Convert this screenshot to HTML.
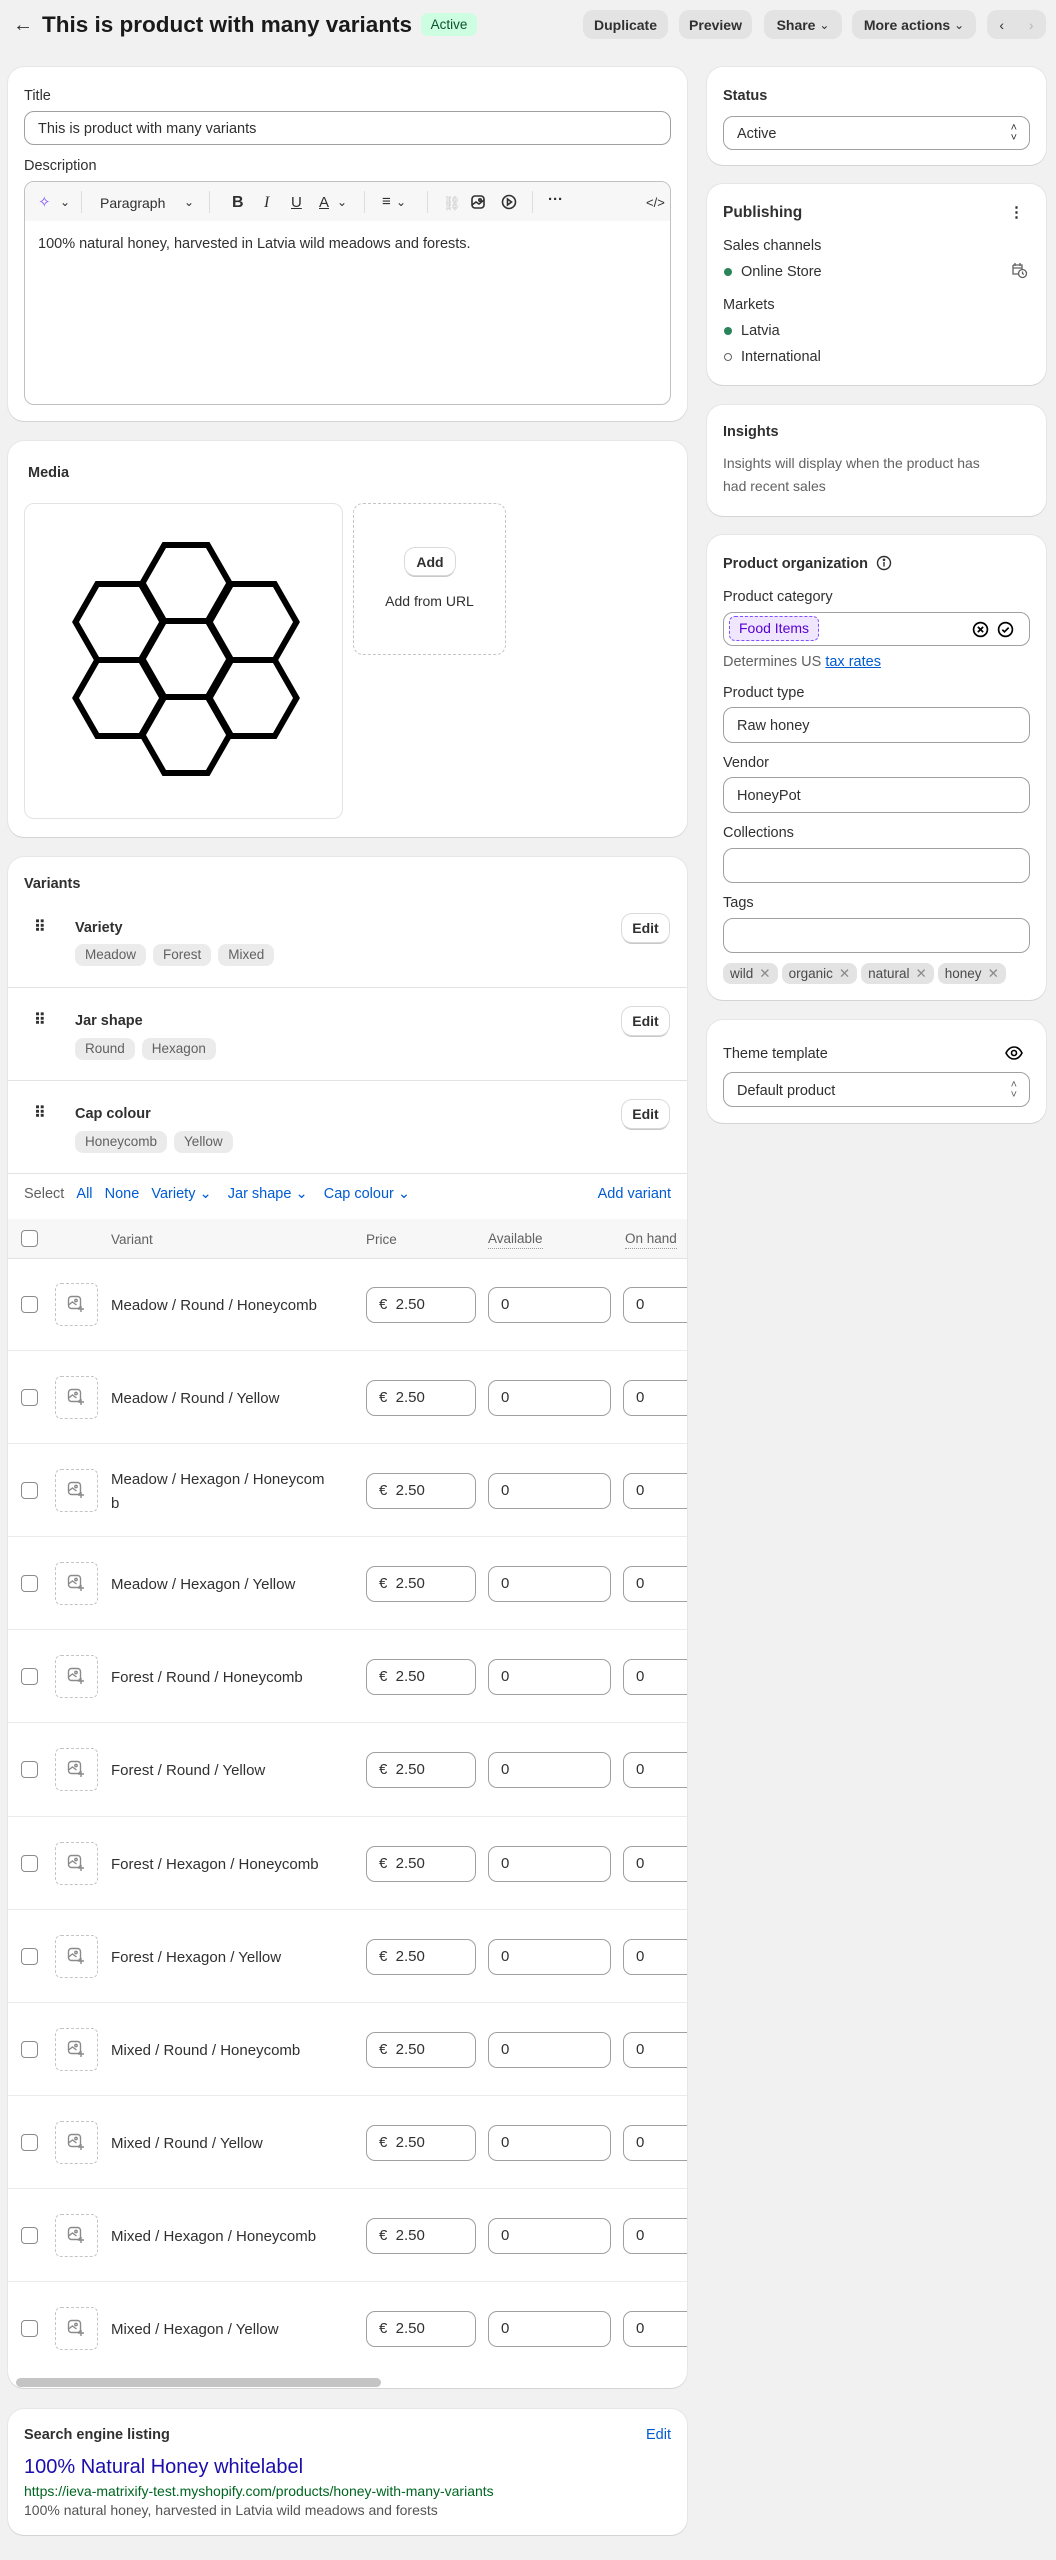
<!DOCTYPE html>
<html><head><meta charset="utf-8"><style>
*{box-sizing:border-box;margin:0;padding:0}
body{width:1056px;height:2560px;background:#f1f1f1;font-family:"Liberation Sans",sans-serif;color:#303030;position:relative;overflow:hidden;font-size:15px}
.a{position:absolute}
.t{position:absolute;line-height:20px;white-space:nowrap;margin-top:1px}
.card{position:absolute;background:#fff;border-radius:16px;box-shadow:0 1px 0 #d4d4d4,0 0 0 1px #e6e6e6;overflow:hidden}
.b{font-weight:bold}
.inp{position:absolute;border:1.5px solid #a0a0a0;border-radius:10px;background:#fff}
.inp.l{border-color:#c0c0c0}
.btn{position:absolute;background:#e3e3e3;border-radius:10px;font-size:14px;font-weight:bold;display:flex;align-items:center;justify-content:center;color:#303030}
.wbtn{position:absolute;background:#fff;border-radius:10px;box-shadow:0 0 0 1px #d9d9d9,0 2px 0 #c8c8c8;font-size:14px;font-weight:bold;display:flex;align-items:center;justify-content:center}
.chip{display:inline-block;background:#ebebeb;color:#616161;border-radius:8px;padding:0 10px;height:22px;line-height:22px;font-size:13.5px;margin-right:7px}
.link{color:#005bd3}
.sep{position:absolute;left:0;right:0;height:1px;background:#e3e3e3}
.row{position:relative;height:93.1px;border-bottom:1px solid #ebebeb}
.row .cb{position:absolute;left:21px;top:38px;width:17px;height:17px;border:1.5px solid #8a8a8a;border-radius:4px}
.row .ph{position:absolute;left:55px;top:25px;width:43px;height:43px;border:1.5px dashed #c4c4c4;border-radius:6px}
.row .ph svg{position:absolute;left:11px;top:11px}
.row .nm{position:absolute;left:111px;top:37px;line-height:21px;font-size:15px}
.row .pr{position:absolute;left:366px;top:29px;width:110px;height:36px;border:1.5px solid #a0a0a0;border-radius:9px;line-height:33px;padding-left:12px;font-size:15px}
.row .av{position:absolute;left:488px;top:29px;width:123px;height:36px;border:1.5px solid #a0a0a0;border-radius:9px;line-height:33px;padding-left:12px}
.row .oh{position:absolute;left:623px;top:29px;width:123px;height:36px;border:1.5px solid #a0a0a0;border-radius:9px;line-height:33px;padding-left:12px}
.tg{display:inline-block;background:#e3e3e3;color:#4a4a4a;border-radius:8px;padding:0 7px;height:21px;line-height:21px;font-size:13.5px;margin-right:4px}
.tg i{font-style:normal;color:#8a8a8a;margin-left:6px}
</style></head><body>

<div class="t" style="left:13px;top:14px;font-size:20px">←</div>
<div class="t b" style="left:42px;top:12px;font-size:22.5px;line-height:24px;color:#1a1a1a">This is product with many variants</div>
<div class="a" style="left:421px;top:13px;width:56px;height:23px;background:#cdfee1;color:#0c5132;border-radius:7px;font-size:13.5px;line-height:23px;text-align:center">Active</div>
<div class="btn" style="left:583px;top:10px;width:85px;height:29px">Duplicate</div>
<div class="btn" style="left:679px;top:10px;width:73px;height:29px">Preview</div>
<div class="btn" style="left:764px;top:10px;width:78px;height:29px">Share&nbsp;<span style="font-weight:normal;font-size:12px">⌄</span></div>
<div class="btn" style="left:852px;top:10px;width:124px;height:29px">More actions&nbsp;<span style="font-weight:normal;font-size:12px">⌄</span></div>
<div class="btn" style="left:987px;top:10px;width:59px;height:29px;justify-content:space-around;font-weight:normal"><span>‹</span><span style="color:#b5b5b5">›</span></div>

<div class="card" style="left:8px;top:67px;width:679px;height:354px">
  <div class="t" style="left:16px;top:18px;font-size:14.5px">Title</div>
  <div class="inp" style="left:16px;top:44px;width:647px;height:34px"><div class="t" style="left:13px;top:6px;font-size:14.5px">This is product with many variants</div></div>
  <div class="t" style="left:16px;top:88px;font-size:14.5px">Description</div>
  <div class="inp l" style="left:16px;top:114px;width:647px;height:224px;overflow:hidden">
    <div class="a" style="left:0;top:0;right:0;height:39px;background:#f7f7f7"></div>
    <div class="t" style="left:13px;top:10px;color:#8051ff;font-size:15px">✧</div>
    <div class="t" style="left:35px;top:9px;font-size:12px">⌄</div>
    <div class="a" style="left:56px;top:9px;width:1px;height:22px;background:#ddd"></div>
    <div class="t" style="left:75px;top:10px;font-size:14px">Paragraph</div>
    <div class="t" style="left:159px;top:9px;font-size:12px">⌄</div>
    <div class="a" style="left:184px;top:9px;width:1px;height:22px;background:#ddd"></div>
    <div class="t b" style="left:207px;top:10px;font-size:16px">B</div>
    <div class="t" style="left:239px;top:10px;font-size:16px;font-style:italic;font-family:'Liberation Serif',serif">I</div>
    <div class="t" style="left:266px;top:10px;font-size:15px;text-decoration:underline">U</div>
    <div class="t" style="left:294px;top:10px;font-size:15px;text-decoration:underline">A</div>
    <div class="t" style="left:312px;top:9px;font-size:12px">⌄</div>
    <div class="a" style="left:339px;top:9px;width:1px;height:22px;background:#ddd"></div>
    <div class="t" style="left:357px;top:9px;font-size:15px">≡</div>
    <div class="t" style="left:371px;top:9px;font-size:12px">⌄</div>
    <div class="a" style="left:402px;top:9px;width:1px;height:22px;background:#ddd"></div>
    <div class="t" style="left:418px;top:10px;font-size:14px;color:#c4c4c4">⛓</div>
    <svg class="a" style="left:445px;top:12px" width="16" height="16" viewBox="0 0 16 16" fill="none" stroke="#303030" stroke-width="1.6"><rect x="2" y="2" width="12" height="12" rx="3"/><path d="M2 11l4-3 3 2 5-4"/><circle cx="10" cy="6" r="1.2"/></svg>
    <svg class="a" style="left:476px;top:12px" width="16" height="16" viewBox="0 0 16 16" fill="none" stroke="#303030" stroke-width="1.6"><circle cx="8" cy="8" r="6.5"/><path d="M6.5 5v6l4-3z"/></svg>
    <div class="a" style="left:507px;top:9px;width:1px;height:22px;background:#ddd"></div>
    <div class="t b" style="left:523px;top:7px;font-size:15px">···</div>
    <div class="t" style="left:621px;top:10px;font-size:13px">&lt;/&gt;</div>
    <div class="t" style="left:13px;top:51px;font-size:14.5px">100% natural honey, harvested in Latvia wild meadows and forests.</div>
  </div>
</div>

<div class="card" style="left:8px;top:441px;width:679px;height:396px">
  <div class="t b" style="left:20px;top:21px;font-size:14.5px">Media</div>
  <div class="a" style="left:16px;top:62px;width:319px;height:316px;border:1px solid #e3e3e3;border-radius:10px"></div>
  <div class="a" style="left:345px;top:62px;width:153px;height:152px;border:1.5px dashed #c4c4c4;border-radius:10px"></div>
  <div class="wbtn" style="left:397px;top:107px;width:50px;height:27px">Add</div>
  <div class="t" style="left:345px;top:149px;width:153px;text-align:center;font-size:14px">Add from URL</div>
</div>
<svg class="a" style="left:0;top:0" width="1056" height="840" fill="none" stroke="#000" stroke-width="6" stroke-linejoin="miter">
<polygon points="142.5,583 164.25,545 207.75,545 229.5,583 207.75,621 164.25,621"/>
<polygon points="142.5,659 164.25,621 207.75,621 229.5,659 207.75,697 164.25,697"/>
<polygon points="142.5,735 164.25,697 207.75,697 229.5,735 207.75,773 164.25,773"/>
<polygon points="75.5,622 97.25,584 140.75,584 162.5,622 140.75,660 97.25,660"/>
<polygon points="75.5,698 97.25,660 140.75,660 162.5,698 140.75,736 97.25,736"/>
<polygon points="209.5,622 231.25,584 274.75,584 296.5,622 274.75,660 231.25,660"/>
<polygon points="209.5,698 231.25,660 274.75,660 296.5,698 274.75,736 231.25,736"/>
</svg>

<div class="card" style="left:8px;top:857px;width:679px;height:1531px">
  <div class="t b" style="left:16px;top:16px;font-size:14.5px">Variants</div>
  <div class="t b" style="left:26px;top:60px;font-size:16px;letter-spacing:1px">⠿</div>
  <div class="t b" style="left:67px;top:60px;font-size:14.5px">Variety</div>
  <div class="a" style="left:67px;top:87px"><span class="chip">Meadow</span><span class="chip">Forest</span><span class="chip">Mixed</span></div>
  <div class="wbtn" style="left:614px;top:57px;width:47px;height:28px">Edit</div>
  <div class="sep" style="top:130px"></div>
  <div class="t b" style="left:26px;top:153px;font-size:16px;letter-spacing:1px">⠿</div>
  <div class="t b" style="left:67px;top:153px;font-size:14.5px">Jar shape</div>
  <div class="a" style="left:67px;top:181px"><span class="chip">Round</span><span class="chip">Hexagon</span></div>
  <div class="wbtn" style="left:614px;top:150px;width:47px;height:28px">Edit</div>
  <div class="sep" style="top:223px"></div>
  <div class="t b" style="left:26px;top:246px;font-size:16px;letter-spacing:1px">⠿</div>
  <div class="t b" style="left:67px;top:246px;font-size:14.5px">Cap colour</div>
  <div class="a" style="left:67px;top:274px"><span class="chip">Honeycomb</span><span class="chip">Yellow</span></div>
  <div class="wbtn" style="left:614px;top:243px;width:47px;height:28px">Edit</div>
  <div class="sep" style="top:316px"></div>
  <div class="t" style="left:16px;top:326px;font-size:14.5px"><span style="color:#616161">Select</span>&nbsp;&nbsp;&nbsp;<span class="link">All</span>&nbsp;&nbsp;&nbsp;<span class="link">None</span>&nbsp;&nbsp;&nbsp;<span class="link">Variety ⌄</span>&nbsp;&nbsp;&nbsp;&nbsp;<span class="link">Jar shape ⌄</span>&nbsp;&nbsp;&nbsp;&nbsp;<span class="link">Cap colour ⌄</span></div>
  <div class="t link" style="right:16px;top:326px;font-size:14.5px">Add variant</div>
  <div class="a" style="left:0;right:0;top:362px;height:40px;background:#f7f7f7;border-bottom:1px solid #e3e3e3"></div>
  <div class="a" style="left:13px;top:373px;width:17px;height:17px;border:1.5px solid #8a8a8a;border-radius:4px;background:#fff"></div>
  <div class="t" style="left:103px;top:372px;font-size:13.5px;color:#616161">Variant</div>
  <div class="t" style="left:358px;top:372px;font-size:13.5px;color:#616161">Price</div>
  <div class="t" style="left:480px;top:372px;font-size:13.5px;color:#616161;border-bottom:1px dotted #999;line-height:18px">Available</div>
  <div class="t" style="left:617px;top:372px;font-size:13.5px;color:#616161;border-bottom:1px dotted #999;line-height:18px">On hand</div>
  <div class="a" style="left:-8px;top:401px;width:700px">
    <div class="row"><div class="cb"></div><div class="ph"><svg width="18" height="18" viewBox="0 0 18 18" fill="none" stroke="#8a8a8a" stroke-width="1.4"><rect x="1.5" y="1.5" width="12" height="12" rx="3"/><path d="M1.5 10l4-3 4 3"/><circle cx="9" cy="5.5" r="1.2"/><path d="M14 11v6M11 14h6"/></svg></div><div class="nm">Meadow / Round / Honeycomb</div><div class="pr">€&nbsp; 2.50</div><div class="av">0</div><div class="oh">0</div></div>
    <div class="row"><div class="cb"></div><div class="ph"><svg width="18" height="18" viewBox="0 0 18 18" fill="none" stroke="#8a8a8a" stroke-width="1.4"><rect x="1.5" y="1.5" width="12" height="12" rx="3"/><path d="M1.5 10l4-3 4 3"/><circle cx="9" cy="5.5" r="1.2"/><path d="M14 11v6M11 14h6"/></svg></div><div class="nm">Meadow / Round / Yellow</div><div class="pr">€&nbsp; 2.50</div><div class="av">0</div><div class="oh">0</div></div>
    <div class="row"><div class="cb"></div><div class="ph"><svg width="18" height="18" viewBox="0 0 18 18" fill="none" stroke="#8a8a8a" stroke-width="1.4"><rect x="1.5" y="1.5" width="12" height="12" rx="3"/><path d="M1.5 10l4-3 4 3"/><circle cx="9" cy="5.5" r="1.2"/><path d="M14 11v6M11 14h6"/></svg></div><div class="nm" style="top:24px;line-height:24px">Meadow / Hexagon / Honeycom<br>b</div><div class="pr">€&nbsp; 2.50</div><div class="av">0</div><div class="oh">0</div></div>
    <div class="row"><div class="cb"></div><div class="ph"><svg width="18" height="18" viewBox="0 0 18 18" fill="none" stroke="#8a8a8a" stroke-width="1.4"><rect x="1.5" y="1.5" width="12" height="12" rx="3"/><path d="M1.5 10l4-3 4 3"/><circle cx="9" cy="5.5" r="1.2"/><path d="M14 11v6M11 14h6"/></svg></div><div class="nm">Meadow / Hexagon / Yellow</div><div class="pr">€&nbsp; 2.50</div><div class="av">0</div><div class="oh">0</div></div>
    <div class="row"><div class="cb"></div><div class="ph"><svg width="18" height="18" viewBox="0 0 18 18" fill="none" stroke="#8a8a8a" stroke-width="1.4"><rect x="1.5" y="1.5" width="12" height="12" rx="3"/><path d="M1.5 10l4-3 4 3"/><circle cx="9" cy="5.5" r="1.2"/><path d="M14 11v6M11 14h6"/></svg></div><div class="nm">Forest / Round / Honeycomb</div><div class="pr">€&nbsp; 2.50</div><div class="av">0</div><div class="oh">0</div></div>
    <div class="row"><div class="cb"></div><div class="ph"><svg width="18" height="18" viewBox="0 0 18 18" fill="none" stroke="#8a8a8a" stroke-width="1.4"><rect x="1.5" y="1.5" width="12" height="12" rx="3"/><path d="M1.5 10l4-3 4 3"/><circle cx="9" cy="5.5" r="1.2"/><path d="M14 11v6M11 14h6"/></svg></div><div class="nm">Forest / Round / Yellow</div><div class="pr">€&nbsp; 2.50</div><div class="av">0</div><div class="oh">0</div></div>
    <div class="row"><div class="cb"></div><div class="ph"><svg width="18" height="18" viewBox="0 0 18 18" fill="none" stroke="#8a8a8a" stroke-width="1.4"><rect x="1.5" y="1.5" width="12" height="12" rx="3"/><path d="M1.5 10l4-3 4 3"/><circle cx="9" cy="5.5" r="1.2"/><path d="M14 11v6M11 14h6"/></svg></div><div class="nm">Forest / Hexagon / Honeycomb</div><div class="pr">€&nbsp; 2.50</div><div class="av">0</div><div class="oh">0</div></div>
    <div class="row"><div class="cb"></div><div class="ph"><svg width="18" height="18" viewBox="0 0 18 18" fill="none" stroke="#8a8a8a" stroke-width="1.4"><rect x="1.5" y="1.5" width="12" height="12" rx="3"/><path d="M1.5 10l4-3 4 3"/><circle cx="9" cy="5.5" r="1.2"/><path d="M14 11v6M11 14h6"/></svg></div><div class="nm">Forest / Hexagon / Yellow</div><div class="pr">€&nbsp; 2.50</div><div class="av">0</div><div class="oh">0</div></div>
    <div class="row"><div class="cb"></div><div class="ph"><svg width="18" height="18" viewBox="0 0 18 18" fill="none" stroke="#8a8a8a" stroke-width="1.4"><rect x="1.5" y="1.5" width="12" height="12" rx="3"/><path d="M1.5 10l4-3 4 3"/><circle cx="9" cy="5.5" r="1.2"/><path d="M14 11v6M11 14h6"/></svg></div><div class="nm">Mixed / Round / Honeycomb</div><div class="pr">€&nbsp; 2.50</div><div class="av">0</div><div class="oh">0</div></div>
    <div class="row"><div class="cb"></div><div class="ph"><svg width="18" height="18" viewBox="0 0 18 18" fill="none" stroke="#8a8a8a" stroke-width="1.4"><rect x="1.5" y="1.5" width="12" height="12" rx="3"/><path d="M1.5 10l4-3 4 3"/><circle cx="9" cy="5.5" r="1.2"/><path d="M14 11v6M11 14h6"/></svg></div><div class="nm">Mixed / Round / Yellow</div><div class="pr">€&nbsp; 2.50</div><div class="av">0</div><div class="oh">0</div></div>
    <div class="row"><div class="cb"></div><div class="ph"><svg width="18" height="18" viewBox="0 0 18 18" fill="none" stroke="#8a8a8a" stroke-width="1.4"><rect x="1.5" y="1.5" width="12" height="12" rx="3"/><path d="M1.5 10l4-3 4 3"/><circle cx="9" cy="5.5" r="1.2"/><path d="M14 11v6M11 14h6"/></svg></div><div class="nm">Mixed / Hexagon / Honeycomb</div><div class="pr">€&nbsp; 2.50</div><div class="av">0</div><div class="oh">0</div></div>
    <div class="row" style="border-bottom:none"><div class="cb"></div><div class="ph"><svg width="18" height="18" viewBox="0 0 18 18" fill="none" stroke="#8a8a8a" stroke-width="1.4"><rect x="1.5" y="1.5" width="12" height="12" rx="3"/><path d="M1.5 10l4-3 4 3"/><circle cx="9" cy="5.5" r="1.2"/><path d="M14 11v6M11 14h6"/></svg></div><div class="nm">Mixed / Hexagon / Yellow</div><div class="pr">€&nbsp; 2.50</div><div class="av">0</div><div class="oh">0</div></div>
  </div>
  <div class="a" style="left:8px;top:1521px;width:365px;height:9px;border-radius:5px;background:#c4c4c4"></div>
</div>

<div class="card" style="left:8px;top:2409px;width:679px;height:126px">
  <div class="t b" style="left:16px;top:15px;font-size:14.5px">Search engine listing</div>
  <div class="t link" style="right:16px;top:15px;font-size:14.5px">Edit</div>
  <div class="t" style="left:16px;top:45px;font-size:20px;line-height:24px;color:#1a0dab">100% Natural Honey whitelabel</div>
  <div class="t" style="left:16px;top:71px;font-size:14px;color:#006621">https://ieva-matrixify-test.myshopify.com/products/honey-with-many-variants</div>
  <div class="t" style="left:16px;top:90px;font-size:14px;color:#545454">100% natural honey, harvested in Latvia wild meadows and forests</div>
</div>

<div class="card" style="left:707px;top:67px;width:339px;height:98px">
  <div class="t b" style="left:16px;top:18px;font-size:14.5px">Status</div>
  <div class="inp" style="left:16px;top:49px;width:307px;height:34px"><div class="t" style="left:13px;top:6px;font-size:14.5px">Active</div><div class="t" style="right:12px;top:5px;font-size:11px;line-height:10px;text-align:center">˄<br>˅</div></div>
</div>
<div class="card" style="left:707px;top:184px;width:339px;height:201px">
  <div class="t b" style="left:16px;top:18px;font-size:15.5px">Publishing</div>
  <div class="t b" style="right:22px;top:18px;font-size:15px">⋮</div>
  <div class="t" style="left:16px;top:51px;font-size:14.5px">Sales channels</div>
  <div class="a" style="left:17px;top:84px;width:8px;height:8px;border-radius:50%;background:#29845a"></div>
  <div class="t" style="left:34px;top:77px;font-size:14.5px">Online Store</div>
  <svg class="a" style="left:303px;top:77px" width="18" height="18" viewBox="0 0 18 18" fill="none" stroke="#616161" stroke-width="1.3"><path d="M3 4h9v5M3 4v9h5M3 7h9M5 2v3M10 2v3"/><circle cx="12.5" cy="12.5" r="4"/><path d="M12.5 10.5v2l1.3 1"/></svg>
  <div class="t" style="left:16px;top:110px;font-size:14.5px">Markets</div>
  <div class="a" style="left:17px;top:143px;width:8px;height:8px;border-radius:50%;background:#29845a"></div>
  <div class="t" style="left:34px;top:136px;font-size:14.5px">Latvia</div>
  <div class="a" style="left:17px;top:169px;width:8px;height:8px;border-radius:50%;border:1.2px solid #616161"></div>
  <div class="t" style="left:34px;top:162px;font-size:14.5px">International</div>
</div>
<div class="card" style="left:707px;top:405px;width:339px;height:111px">
  <div class="t b" style="left:16px;top:16px;font-size:14.5px">Insights</div>
  <div class="t" style="left:16px;top:46px;font-size:14px;color:#616161;line-height:23px">Insights will display when the product has<br>had recent sales</div>
</div>
<div class="card" style="left:707px;top:535px;width:339px;height:465px">
  <div class="t b" style="left:16px;top:18px;font-size:14.5px">Product organization</div>
  <svg class="a" style="left:169px;top:20px" width="16" height="16" viewBox="0 0 16 16" fill="none" stroke="#303030" stroke-width="1.4"><circle cx="8" cy="8" r="6.5"/><path d="M8 7v4.5"/><circle cx="8" cy="4.8" r=".6" fill="#303030"/></svg>
  <div class="t" style="left:16px;top:51px;font-size:14.5px">Product category</div>
  <div class="inp" style="left:16px;top:77px;width:307px;height:34px">
    <div class="a" style="left:5px;top:3px;width:90px;height:25px;background:#f0e6ff;border:1px dashed #8051ff;border-radius:6px;color:#5700d1;font-size:14px;line-height:23px;text-align:center">Food Items</div>
    <svg class="a" style="left:248px;top:8px" width="17" height="17" viewBox="0 0 16 16" fill="none" stroke="#000" stroke-width="1.6"><circle cx="8" cy="8" r="6.5"/><path d="M5.5 5.5l5 5M10.5 5.5l-5 5"/></svg>
    <svg class="a" style="left:273px;top:8px" width="17" height="17" viewBox="0 0 16 16" fill="none" stroke="#000" stroke-width="1.6"><circle cx="8" cy="8" r="6.5"/><path d="M5 8.2l2 2 4-4"/></svg>
  </div>
  <div class="t" style="left:16px;top:116px;font-size:14.5px;color:#616161">Determines US <span class="link" style="text-decoration:underline">tax rates</span></div>
  <div class="t" style="left:16px;top:147px;font-size:14.5px">Product type</div>
  <div class="inp" style="left:16px;top:172px;width:307px;height:36px"><div class="t" style="left:13px;top:7px;font-size:14.5px">Raw honey</div></div>
  <div class="t" style="left:16px;top:217px;font-size:14.5px">Vendor</div>
  <div class="inp" style="left:16px;top:242px;width:307px;height:36px"><div class="t" style="left:13px;top:7px;font-size:14.5px">HoneyPot</div></div>
  <div class="t" style="left:16px;top:287px;font-size:14.5px">Collections</div>
  <div class="inp" style="left:16px;top:313px;width:307px;height:35px"></div>
  <div class="t" style="left:16px;top:357px;font-size:14.5px">Tags</div>
  <div class="inp" style="left:16px;top:383px;width:307px;height:35px"></div>
  <div class="a" style="left:16px;top:428px;white-space:nowrap"><span class="tg">wild<i>✕</i></span><span class="tg">organic<i>✕</i></span><span class="tg">natural<i>✕</i></span><span class="tg">honey<i>✕</i></span></div>
</div>
<div class="card" style="left:707px;top:1020px;width:339px;height:103px">
  <div class="t" style="left:16px;top:23px;font-size:14.5px">Theme template</div>
  <svg class="a" style="left:298px;top:25px" width="18" height="16" viewBox="0 0 18 16" fill="none" stroke="#000" stroke-width="1.6"><path d="M1 8c2-4 5-6 8-6s6 2 8 6c-2 4-5 6-8 6s-6-2-8-6z"/><circle cx="9" cy="8" r="2.5"/></svg>
  <div class="inp" style="left:16px;top:52px;width:307px;height:35px"><div class="t" style="left:13px;top:7px;font-size:14.5px">Default product</div><div class="t" style="right:12px;top:6px;font-size:11px;line-height:10px;text-align:center;color:#616161">˄<br>˅</div></div>
</div>

</body></html>
